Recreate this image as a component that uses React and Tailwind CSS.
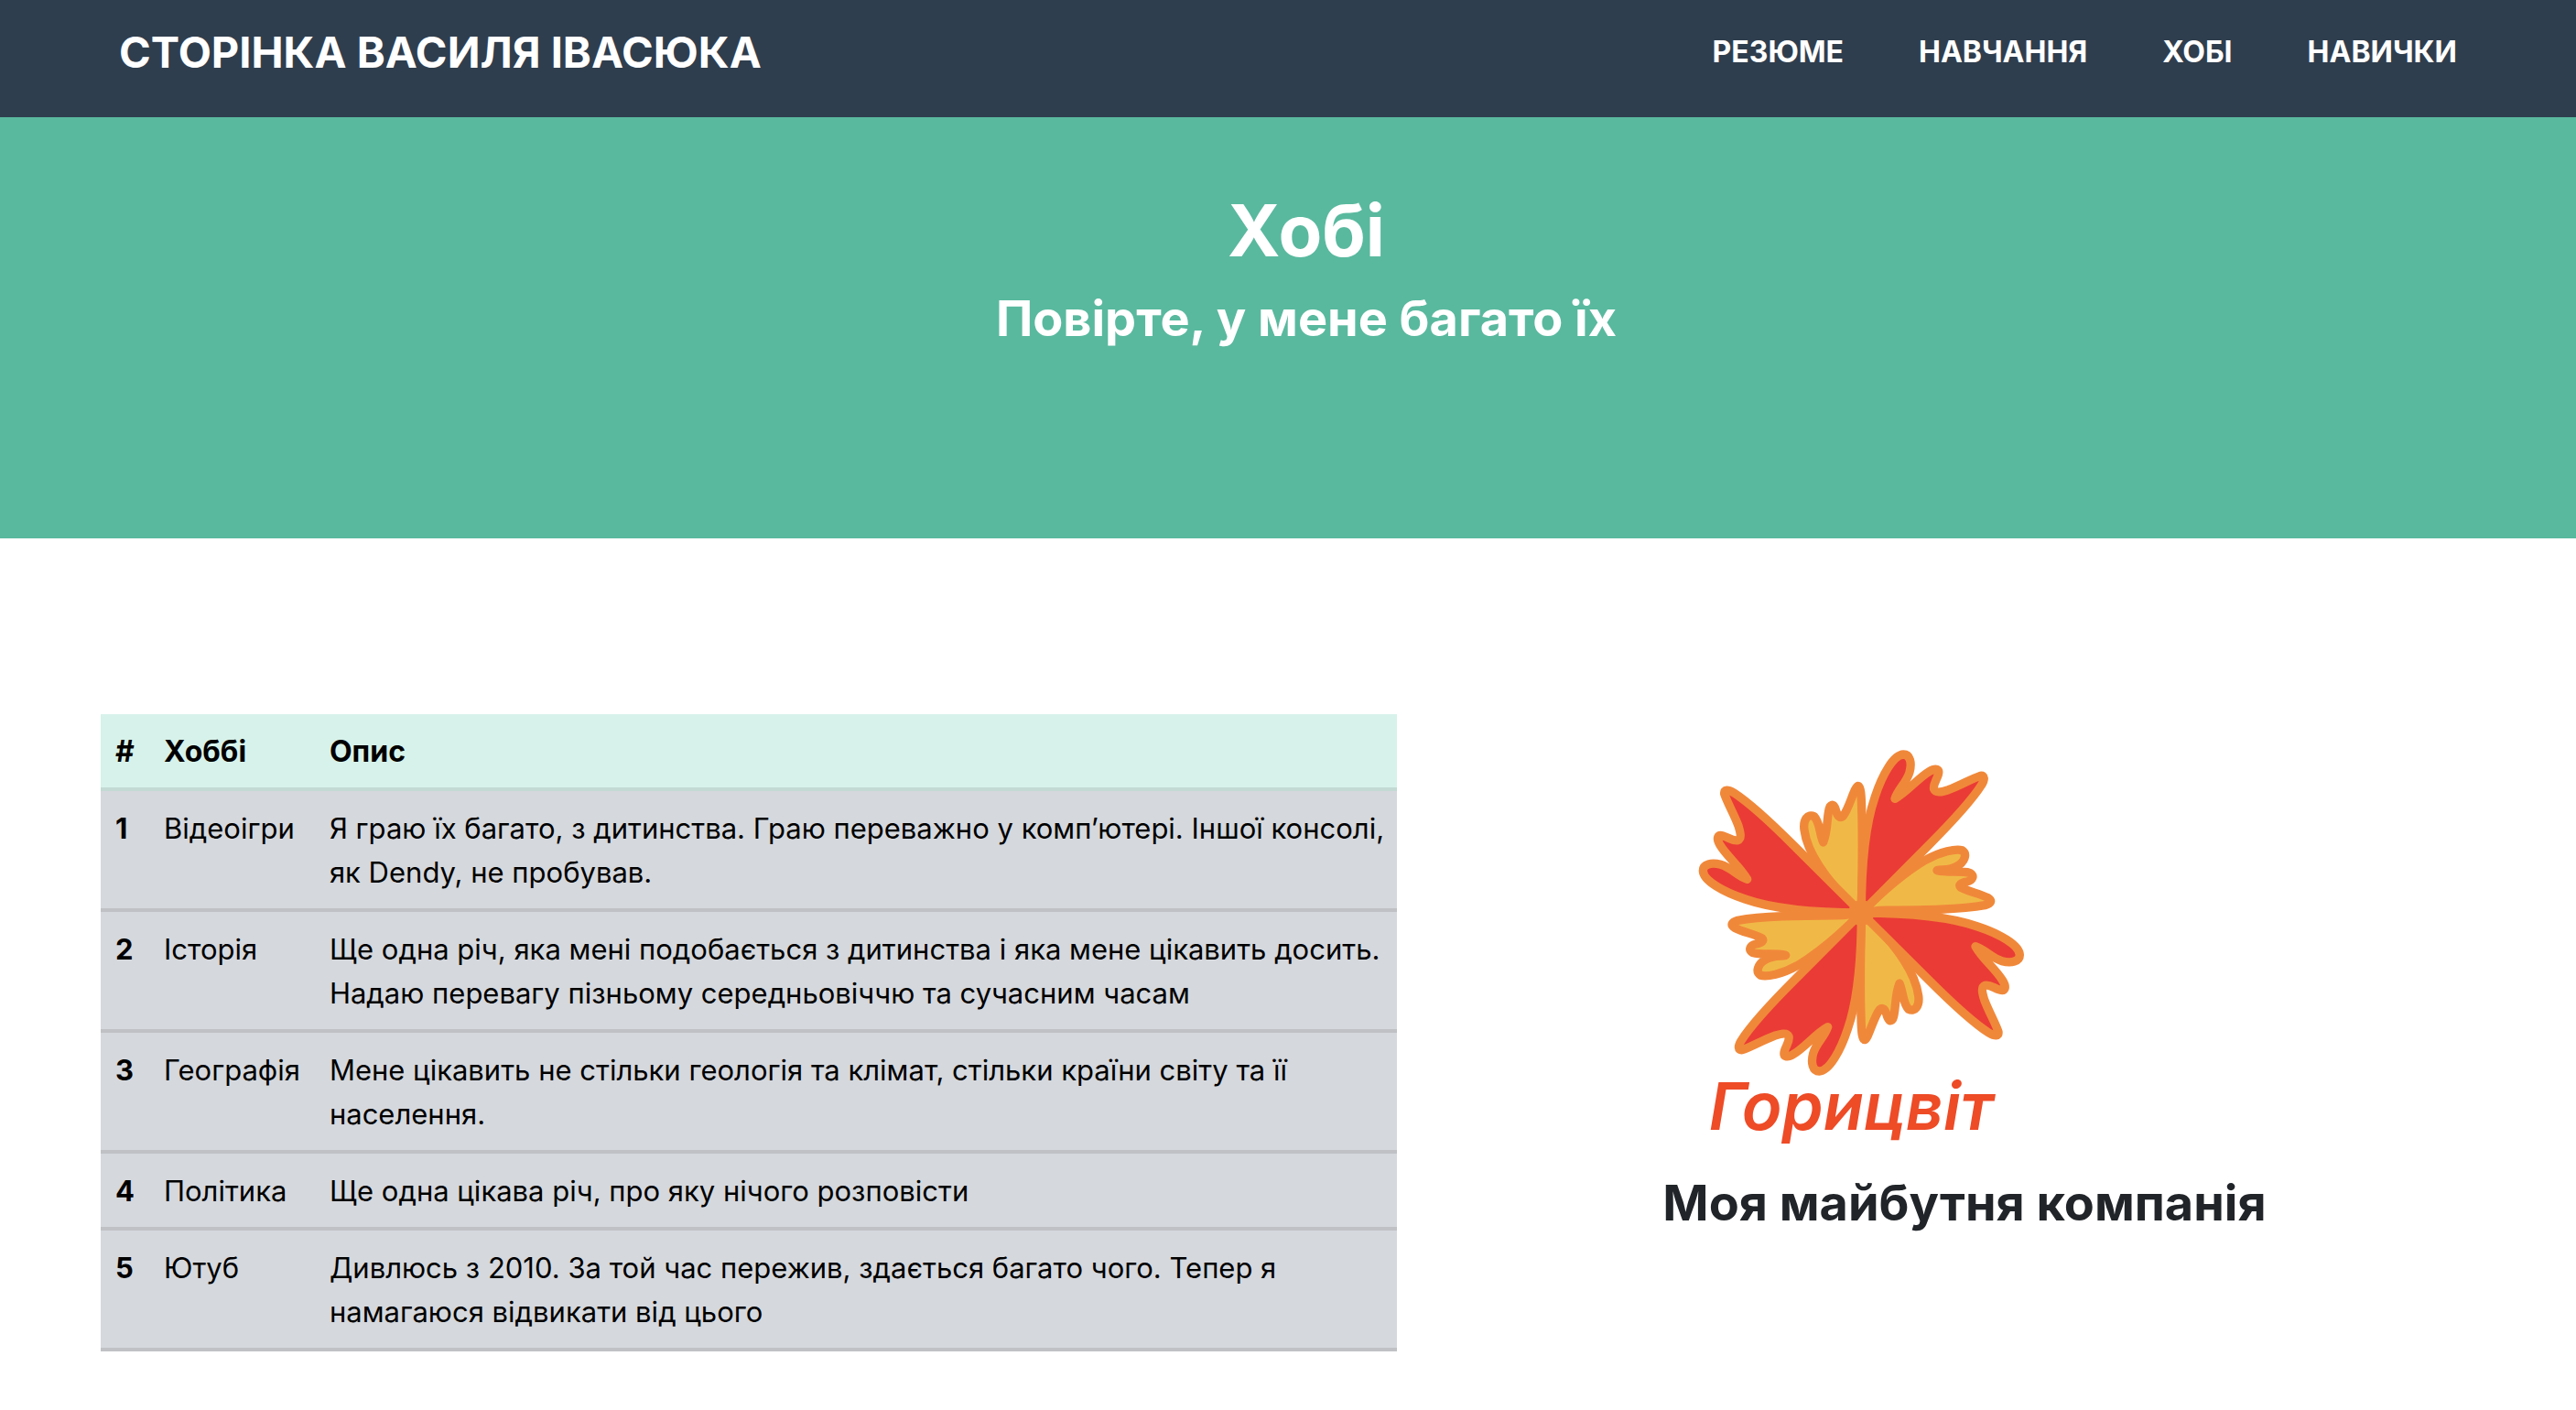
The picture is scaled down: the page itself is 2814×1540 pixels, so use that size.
const LINKS = ['Резюме', 'Навчання', 'Хобі', 'Навички'];

const HOBBIES = [
  ['Відеоігри', 'Я граю їх багато, з дитинства. Граю переважно у комп’ютері. Іншої консолі, як Dendy, не пробував.'],
  ['Історія', 'Ще одна річ, яка мені подобається з дитинства і яка мене цікавить досить. Надаю перевагу пізньому середньовіччю та сучасним часам'],
  ['Географія', 'Мене цікавить не стільки геологія та клімат, стільки країни світу та її населення.'],
  ['Політика', 'Ще одна цікава річ, про яку нічого розповісти'],
  ['Ютуб', 'Дивлюсь з 2010. За той час пережив, здається багато чого. Тепер я намагаюся відвикати від цього'],
];

const RED_PETAL =
  'M640 621 C640 480 650 340 685 240 C708 170 745 103 778 102 C800 102 806 130 798 160 C788 195 760 215 750 247 C790 225 825 180 862 158 C885 144 897 150 892 168 C886 188 874 200 878 216 C884 230 905 224 925 218 C965 203 1000 182 1030 172 C1046 170 1044 185 1034 202 C1000 255 930 330 860 400 Z';
const GOLD_TOP =
  'M640 621 C642 500 645 380 641 280 C640 235 638 205 629 205 C616 210 600 280 580 304 C570 312 563 305 558 290 C552 268 545 262 537 273 C526 295 532 350 515 390 C502 360 505 325 485 305 C465 295 448 315 453 350 C462 420 520 510 615 600 Z';
const GOLD_RIGHT =
  'M640 621 C700 560 780 490 850 448 C900 420 950 410 970 416 C988 428 980 455 950 470 C925 483 905 478 888 482 C920 490 970 482 995 490 C1012 500 1005 515 985 519 C965 522 958 530 965 537 C985 550 1030 558 1055 572 C1070 582 1065 590 1045 596 C960 612 820 612 700 613 Z';

function Logo() {
  return (
    <svg viewBox="0 0 1320 1440" className="ml-1 h-[480px] w-[440px]" role="img" aria-label="Горицвіт">
      <g stroke="#f0883a" strokeWidth="28" strokeLinejoin="round">
        {[0, 180].map((a) => (
          <g key={a} transform={`rotate(${a} 640 621)`} fill="#f0b947">
            <path d={GOLD_TOP} />
            <path d={GOLD_RIGHT} />
          </g>
        ))}
        {[0, 90, 180, 270].map((a) => (
          <path key={a} d={RED_PETAL} fill="#ea3b36" transform={`rotate(${a} 640 621)`} />
        ))}
      </g>
      <circle cx="640" cy="621" r="42" fill="#f0883a" />
      <text x="140" y="1331" fontSize="216" fill="#ee4b27" className="font-[Inter,sans-serif] font-semibold italic">
        Горицвіт
      </text>
    </svg>
  );
}

export default function App() {
  return (
    <div className="min-h-screen bg-white font-[Inter,'Liberation_Sans',sans-serif] text-[#212529]">
      <header className="flex h-32 items-start justify-between bg-[#2f3e4e] px-[130px] pt-5 font-bold text-white uppercase">
        <a href="#" className="text-[47px] leading-[74px]">Сторінка Василя Івасюка</a>
        <nav className="flex gap-[82px]">
          {LINKS.map((l) => (
            <a key={l} href="#" className="text-[32px] leading-[74px]">{l}</a>
          ))}
        </nav>
      </header>

      <section className="h-[460px] bg-[#59b99e] pt-[76px] pl-10 text-center font-bold text-white">
        <h1 className="text-[78px] leading-[96px]">Хобі</h1>
        <h2 className="mt-[14px] text-[54px] leading-[68px]">Повірте, у мене багато їх</h2>
      </section>

      <main className="grid grid-cols-[1416fr_1116fr] gap-x-[62px] px-[110px] pt-48">
        <table className="w-full self-start border-collapse text-left text-[31px] leading-[48px] text-black">
          <thead>
            <tr className="bg-[#d7f2ea] text-[32px]">
              {['#', 'Хоббі', 'Опис'].map((h) => (
                <th key={h} scope="col" className="border-b-4 border-[#c2dad3] px-4 pt-[17px] pb-[15px] font-bold">{h}</th>
              ))}
            </tr>
          </thead>
          <tbody>
            {HOBBIES.map(([name, text], i) => (
              <tr key={name} className="bg-[#d5d8dd] align-top">
                <th scope="row" className="border-b-4 border-[#bfc1c5] px-4 pt-[17px] pb-[15px] font-bold">{i + 1}</th>
                <td className="border-b-4 border-[#bfc1c5] px-4 pt-[17px] pb-[15px]">{name}</td>
                <td className="border-b-4 border-[#bfc1c5] pt-[17px] pr-1 pb-[15px] pl-4">{text}</td>
              </tr>
            ))}
          </tbody>
        </table>
        <div className="flex flex-col items-start justify-self-center pt-[10px]">
          <Logo />
          <h2 className="mt-[10px] text-[54px] leading-[68px] font-bold">Моя майбутня компанія</h2>
        </div>
      </main>
    </div>
  );
}
